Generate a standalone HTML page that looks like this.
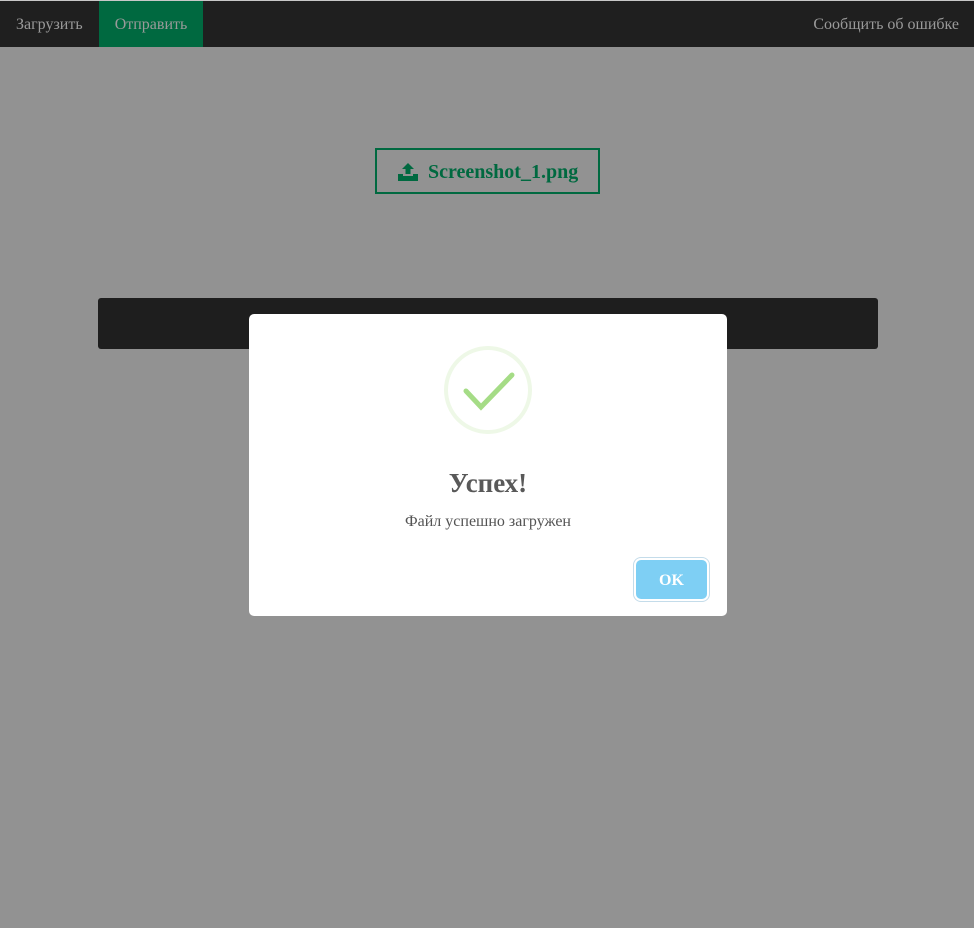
<!DOCTYPE html>
<html><head><meta charset="utf-8"><style>
*{margin:0;padding:0;box-sizing:border-box}
body{width:974px;height:928px;background:#929292;font-family:"Liberation Serif",serif;position:relative;overflow:hidden}
.top{position:absolute;left:0;top:0;width:974px;height:1px;background:#c8c8c8}
.nav{position:absolute;left:0;top:1px;width:974px;height:46px;background:#1f1f1f;color:#9a9a9a;font-size:16px}
.nav span{position:absolute;top:0;height:46px;line-height:48px}
.send{left:99px;width:104px;background:#006940;text-align:center}
.file{position:absolute;left:375px;top:148px;width:225px;height:46px;border:2px solid #006940;color:#006940;font-weight:bold;font-size:20px;line-height:45px;padding-left:51px}
.file svg{position:absolute;left:20px;top:12px}
.bar{position:absolute;left:98px;top:298px;width:780px;height:51px;background:#1e1e1e;border-radius:3px}
.modal{position:absolute;left:249px;top:314px;width:478px;height:302px;background:#fff;border-radius:5px}
.modal svg.c{position:absolute;left:194px;top:31px}
.t{position:absolute;left:0;width:478px;top:154px;text-align:center;font-size:27px;font-weight:bold;color:#595959}
.s{position:absolute;left:0;width:478px;top:199px;text-align:center;font-size:16px;color:#545454}
.ok{position:absolute;left:387px;top:246px;width:71px;height:39px;background:#7ecff4;border-radius:5px;box-shadow:0 0 0 2px #fff,0 0 0 3px #c4dcea;color:#fff;font-weight:bold;font-size:16px;text-align:center;line-height:41px}
</style></head><body>
<div class="top"></div>
<div class="nav"><span style="left:16px">Загрузить</span><span class="send">Отправить</span><span style="right:15px">Сообщить об ошибке</span></div>
<div class="file"><svg width="22" height="20" viewBox="0 0 22 20"><path d="M11 1 L5 7 H8.5 V12 H13.5 V7 H17 Z" fill="#006940"/><path d="M1 12 H6 V14 H16 V12 H21 V19 H1 Z" fill="#006940"/></svg>Screenshot_1.png</div>
<div class="bar"></div>
<div class="modal">
<svg class="c" width="90" height="90" viewBox="0 0 90 90"><circle cx="45" cy="45" r="42" fill="none" stroke="#eef8e7" stroke-width="4"/><path d="M23 46 L38 62 L69 30" fill="none" stroke="#a5dc86" stroke-width="5" stroke-linecap="round"/></svg>
<div class="t">Успех!</div>
<div class="s">Файл успешно загружен</div>
<div class="ok">OK</div>
</div>
</body></html>
